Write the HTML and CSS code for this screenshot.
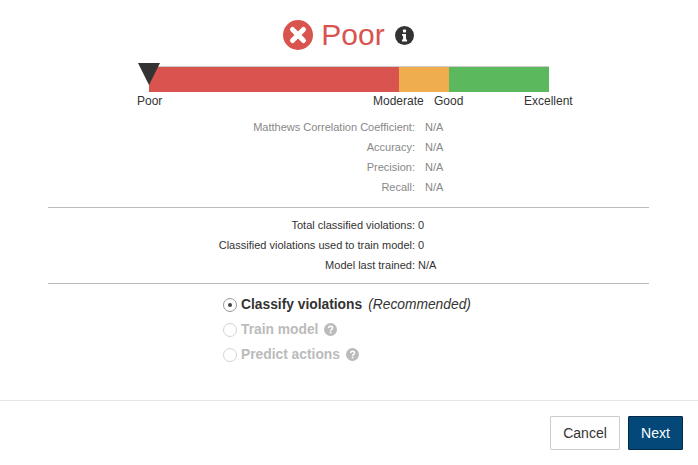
FILE: index.html
```html
<!DOCTYPE html>
<html lang="en">
<head>
<meta charset="utf-8">
<title>Model quality</title>
<link rel="stylesheet" href="styles.css">
</head>
<body>
<main class="content">
  <h1 class="status">
    <svg class="status-icon" viewBox="0 0 30 30"><circle cx="15" cy="15" r="15" fill="#d9534f"/><path d="M9.5 9.5l11 11M20.5 9.5l-11 11" stroke="#fff" stroke-width="5" stroke-linecap="round"/></svg>
    <span class="status-text">Poor</span>
    <svg class="info-icon" viewBox="0 0 20 20"><circle cx="10" cy="10" r="10" fill="#333"/><rect x="8.4" y="3.6" width="3.2" height="3.2" rx=".8" fill="#fff"/><path d="M7.4 8.3h4.2v6h1.1v2H7.4v-2h1.1v-4H7.4z" fill="#fff"/></svg>
  </h1>
  <div class="scale">
    <div class="bar">
      <div class="seg seg-red"></div>
      <div class="seg seg-amber"></div>
      <div class="seg seg-green"></div>
      <div class="marker"></div>
    </div>
    <div class="labels">
      <span class="label-poor">Poor</span>
      <span class="label-moderate">Moderate</span>
      <span class="label-good">Good</span>
      <span class="label-excellent">Excellent</span>
    </div>
  </div>
  <dl class="metrics">
    <div class="row"><dt>Matthews Correlation Coefficient:</dt><dd>N/A</dd></div>
    <div class="row"><dt>Accuracy:</dt><dd>N/A</dd></div>
    <div class="row"><dt>Precision:</dt><dd>N/A</dd></div>
    <div class="row"><dt>Recall:</dt><dd>N/A</dd></div>
  </dl>
  <hr class="rule">
  <dl class="stats">
    <div class="row"><dt>Total classified violations:</dt><dd>0</dd></div>
    <div class="row"><dt>Classified violations used to train model:</dt><dd>0</dd></div>
    <div class="row"><dt>Model last trained:</dt><dd>N/A</dd></div>
  </dl>
  <hr class="rule rule-second">
  <div class="options">
    <div class="option">
      <span class="radio radio-on"></span><b>Classify violations</b><i>(Recommended)</i>
    </div>
    <div class="option option-off">
      <span class="radio"></span><b>Train model</b>
      <svg class="help" viewBox="0 0 14 14"><circle cx="7" cy="7" r="7" fill="#bbb"/><path d="M4.9 5.4C5 4.2 5.9 3.5 7.1 3.5c1.200 0 2.100.7 2.100 1.800 0 1.600-2 1.500-2 3" fill="none" stroke="#fff" stroke-width="1.700"/><rect x="6.200" y="9.300" width="1.900" height="1.800" fill="#fff"/></svg>
    </div>
    <div class="option option-off">
      <span class="radio"></span><b>Predict actions</b>
      <svg class="help" viewBox="0 0 14 14"><circle cx="7" cy="7" r="7" fill="#bbb"/><path d="M4.900 5.400C5 4.200 5.900 3.500 7.100 3.500c1.200 0 2.100.7 2.100 1.800 0 1.600-2 1.500-2 3" fill="none" stroke="#fff" stroke-width="1.700"/><rect x="6.200" y="9.300" width="1.900" height="1.800" fill="#fff"/></svg>
    </div>
  </div>
</main>
<footer class="footer">
  <button class="btn btn-cancel" type="button">Cancel</button>
  <button class="btn btn-next" type="button">Next</button>
</footer>
</body>
</html>
```
FILE: styles.css
```css
* { box-sizing: border-box; }
html, body { margin: 0; padding: 0; }
body {
  width: 698px;
  height: 465px;
  overflow: hidden;
  background: #fff;
  font-family: "Liberation Sans", Arial, sans-serif;
  color: #333;
  display: flex;
  flex-direction: column;
}
.content { height: 400px; padding: 17px 49px 0 48px; }
.status {
  margin: 0;
  height: 36px;
  display: flex;
  align-items: center;
  justify-content: center;
  font-weight: 400;
}
.status-icon { width: 30px; height: 30px; margin-right: 8px; }
.status-text { font-size: 30px; color: #d9534f; line-height: 36px; }
.info-icon { width: 19px; height: 19px; margin-left: 10px; }
.scale { width: 440px; margin: 13px 0 0 88px; }
.bar {
  position: relative;
  margin-left: 13px;
  width: 400px;
  height: 26px;
  display: flex;
  border-top: 1px solid #ccc;
}
.seg { height: 25px; }
.seg-red { width: 250px; background: #d9534f; }
.seg-amber { width: 50px; background: #f0ad4e; }
.seg-green { width: 100px; background: #5cb85c; }
.marker {
  position: absolute;
  left: -11px;
  top: -4px;
  width: 0;
  height: 0;
  border-left: 11px solid transparent;
  border-right: 11px solid transparent;
  border-top: 22px solid #333;
}
.labels { position: relative; height: 18px; font-size: 12px; line-height: 18px; color: #333; }
.labels span { position: absolute; top: 0; white-space: nowrap; }
.label-poor { left: 1px; }
.label-moderate { left: 237px; }
.label-good { left: 298px; }
.label-excellent { left: 388px; }
dl { margin: 0; font-size: 11px; }
.row { display: flex; height: 20px; line-height: 20px; }
dt { text-align: right; }
dd { margin: 0; }
.metrics { margin-top: 7px; color: #888; }
.metrics dt { width: 367px; }
.metrics dd { margin-left: 10px; }
.rule { border: 0; border-top: 1px solid #bbb; margin: 0; }
.metrics + .rule { margin-top: 10px; }
.stats { margin-top: 7px; color: #333; }
.stats dt { width: 367px; }
.stats dd { white-space: nowrap; }
.stats .row dd { margin-left: 3px; }
.rule-second { margin-top: 8px; }
.options { margin: 8px 0 0 175px; }
.option {
  display: flex;
  align-items: center;
  height: 25px;
  font-size: 13.8px;
  color: #333;
}
.option b { font-weight: 700; }
.option i { margin-left: 6px; }
.option-off { color: #bbb; }
.radio {
  width: 14px;
  height: 14px;
  border: 1px solid #bbb;
  border-radius: 50%;
  margin-right: 4px;
  display: flex;
  align-items: center;
  justify-content: center;
}
.option-off .radio { border-color: #d4d4d4; }
.radio-on { border-color: #999; }
.radio-on::after {
  content: "";
  width: 4px;
  height: 4px;
  border-radius: 50%;
  background: #444;
}
.help { width: 13px; height: 13px; margin-left: 6px; }
.footer {
  height: 65px;
  border-top: 1px solid #e5e5e5;
  display: flex;
  justify-content: flex-end;
  align-items: flex-start;
  gap: 8px;
  padding: 15px 15px 0 0;
}
.btn {
  height: 34px;
  font-family: inherit;
  font-size: 14px;
  padding: 0;
  border-radius: 1px;
}
.btn-cancel { width: 70px; background: #fff; border: 1px solid #ccc; color: #333; }
.btn-next { width: 55px; background: #04487a; border: 1px solid #022b4a; color: #fff; font-weight: 400; }
```
